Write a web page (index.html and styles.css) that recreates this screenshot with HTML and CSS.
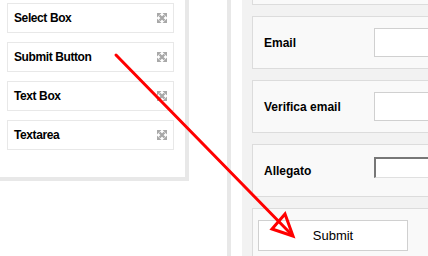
FILE: index.html
```html
<!DOCTYPE html>
<html>
<head>
<meta charset="utf-8">
<link rel="stylesheet" href="styles.css">
</head>
<body>
<div class="page">
  <aside class="palette">
    <div class="item"><span>Select Box</span><svg class="move" viewBox="0 0 10 10"><use href="#mv"/></svg></div>
    <div class="item"><span>Submit Button</span><svg class="move" viewBox="0 0 10 10"><use href="#mv"/></svg></div>
    <div class="item"><span>Text Box</span><svg class="move" viewBox="0 0 10 10"><use href="#mv"/></svg></div>
    <div class="item"><span>Textarea</span><svg class="move" viewBox="0 0 10 10"><use href="#mv"/></svg></div>
  </aside>
  <div class="gap"></div>
  <main class="canvas">
    <div class="form">
      <div class="row first"></div>
      <div class="row"><label class="lbl">Email</label><div class="input"></div></div>
      <div class="row"><label class="lbl">Verifica email</label><div class="input"></div></div>
      <div class="row"><label class="lbl">Allegato</label><div class="input file"></div></div>
      <div class="row submit-row"><button class="btn">Submit</button></div>
    </div>
  </main>
</div>
<svg class="arrow" width="428" height="256" viewBox="0 0 428 256">
  <defs>
    <g id="mv" fill="#a8a8a8" stroke="#a8a8a8">
      <path d="M2.5 2.5 L7.5 7.5 M7.5 2.5 L2.5 7.5" stroke-width="2.4" fill="none"/>
      <path d="M0 0 H4.5 L0 4.5 Z M10 0 V4.5 L5.5 0 Z M0 10 V5.5 L4.5 10 Z M10 10 H5.5 L10 5.5 Z" stroke="none"/>
    </g>
  </defs>
  <line x1="116" y1="55" x2="291" y2="234" stroke="#f00" stroke-width="3" stroke-linecap="round"/>
  <polygon points="285,214 272,229 293,236" fill="none" stroke="#f00" stroke-width="3" stroke-linejoin="miter"/>
</svg>
</body>
</html>
```
FILE: styles.css
```css
html, body {
  margin: 0;
  padding: 0;
  background: #fff;
}
body {
  width: 428px;
  height: 256px;
  overflow: hidden;
  position: relative;
  font-family: "Liberation Sans", Arial, sans-serif;
  color: #000;
}
.page {
  display: flex;
  align-items: flex-start;
  height: 256px;
}
.palette {
  flex: none;
  width: 189px;
  height: 181px;
  box-sizing: border-box;
  padding: 3px 11px 0 7px;
  border-right: 4px solid #e8e8e8;
  border-bottom: 4px solid #e8e8e8;
  background: #fff;
  display: flex;
  flex-direction: column;
  gap: 9px;
}
.item {
  height: 30px;
  box-sizing: border-box;
  border: 1px solid #e8e8e8;
  background: #fff;
  display: flex;
  align-items: center;
  justify-content: space-between;
  padding: 0 6px 0 6px;
  font-weight: bold;
  font-size: 12px;
  letter-spacing: -0.4px;
}
.move {
  width: 10px;
  height: 10px;
  flex: none;
}
.gap {
  flex: none;
  width: 38px;
}
.canvas {
  flex: 1;
  height: 256px;
  border-left: 4px solid #e8e8e8;
  padding-left: 11px;
  box-sizing: border-box;
  overflow: hidden;
}
.form {
  background: #f2f2f2;
  height: 320px;
  padding-left: 10px;
  margin-top: -48px;
  display: flex;
  flex-direction: column;
  gap: 11px;
}
.row {
  height: 53px;
  box-sizing: border-box;
  border: 1px solid #dcdcdc;
  background: #f9f9f9;
  margin-right: -30px;
  display: flex;
  align-items: center;
  padding-left: 11px;
  flex: none;
}
.lbl {
  width: 110px;
  flex: none;
  font-weight: bold;
  font-size: 12px;
}
.input {
  flex: 1;
  height: 29px;
  box-sizing: border-box;
  border: 1px solid #d0d0d0;
  background: #fff;
}
.input.file {
  height: 21px;
  margin-top: -6px;
  border-top: 2px solid #777;
  border-left: 2px solid #777;
  border-right: 1px solid #e0e0e0;
  border-bottom: 1px solid #e0e0e0;
}
.submit-row {
  align-items: flex-start;
  padding-left: 5px;
  padding-top: 11px;
}
.btn {
  width: 150px;
  height: 31px;
  box-sizing: border-box;
  border: 1px solid #d0d0d0;
  background: #fff;
  font-family: "Liberation Sans", Arial, sans-serif;
  font-size: 13px;
  color: #000;
  padding: 0;
}
.arrow {
  position: absolute;
  left: 0;
  top: 0;
  pointer-events: none;
}
```
